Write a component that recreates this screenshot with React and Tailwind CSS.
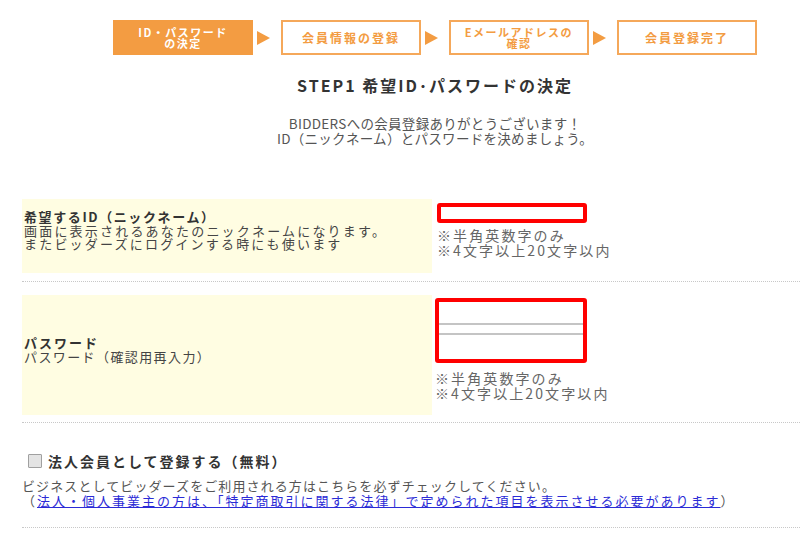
import React from 'react';

const StepBox = ({ active, lines, small }) => (
  <div
    className={
      'w-[140px] h-[35px] flex flex-col items-center justify-center font-bold text-center ' +
      (active
        ? 'bg-[#f39c42] text-white'
        : 'bg-white border-2 border-[#f5a85a] text-[#f39c42]')
    }
  >
    {lines.map((l, i) => (
      <span
        key={i}
        className={small ? 'text-[11px] leading-[11px] tracking-[1.5px]' : 'text-[12px] leading-[14px] tracking-[2px]'}
      >
        {l}
      </span>
    ))}
  </div>
);

const Arrow = () => (
  <div className="ml-[4px] mr-[11px] w-0 h-0 border-l-[13px] border-l-[#f39c42] border-y-[7px] border-y-transparent" />
);

const Notes = () => (
  <div className="text-[14px] leading-[15px] tracking-[2.1px] text-[#666]">
    <div>※半角英数字のみ</div>
    <div>※4文字以上20文字以内</div>
  </div>
);

const Divider = ({ className }) => (
  <div className={'border-t border-dotted border-[#c8c8c8] ' + className} />
);

export default function App() {
  return (
    <div className="w-[800px] h-[554px] bg-white overflow-hidden font-['Noto_Sans_CJK_JP',sans-serif]">
      <div className="ml-[22px] w-[826px]">
        {/* step bar */}
        <div className="pt-[20px] flex items-center justify-center">
          <StepBox active small lines={['ID・パスワード', 'の決定']} />
          <Arrow />
          <StepBox lines={['会員情報の登録']} />
          <Arrow />
          <StepBox small lines={['Eメールアドレスの', '確認']} />
          <Arrow />
          <StepBox lines={['会員登録完了']} />
        </div>

        <h1 className="mt-[20px] text-center text-[16px] leading-[20px] font-bold tracking-[2px] text-[#333]">
          STEP1 希望ID･パスワードの決定
        </h1>

        <div className="mt-[21px] text-center text-[13.5px] leading-[15px] tracking-[0.3px] text-[#555]">
          <div>BIDDERSへの会員登録ありがとうございます！</div>
          <div>ID（ニックネーム）とパスワードを決めましょう。</div>
        </div>

        {/* row 1 */}
        <div className="mt-[53px] flex h-[74px]">
          <div className="w-[410px] bg-[#fffde2] pt-[11px] pl-[2px] text-[13px] leading-[13.5px] tracking-[2.2px] text-[#444]">
            <div className="font-bold tracking-[1.6px] text-[#333]">希望するID（ニックネーム）</div>
            <div>画面に表示されるあなたのニックネームになります。</div>
            <div>またビッダーズにログインする時にも使います</div>
          </div>
          <div className="pl-[5px] pt-[4px]">
            <div className="w-[150px] h-[20px] border-[4px] border-[#ff0000] rounded-[3px] bg-white" />
            <div className="mt-[5px]">
              <Notes />
            </div>
          </div>
        </div>

        <Divider className="mt-[8px]" />

        {/* row 2 */}
        <div className="mt-[13px] flex h-[120px]">
          <div className="w-[410px] bg-[#fffde2] pt-[41px] pl-[2px] text-[13px] leading-[14px] tracking-[1.4px] text-[#444]">
            <div className="font-bold tracking-[2px] text-[#333]">パスワード</div>
            <div>パスワード（確認用再入力）</div>
          </div>
          <div className="pl-[3px] pt-[3px]">
            <div className="w-[152px] h-[65px] border-[4px] border-[#ff0000] rounded-[3px] bg-white flex flex-col">
              <div className="h-[23px] border-b-2 border-[#c4c4c4]" />
              <div className="h-[8px]" />
              <div className="border-t-2 border-[#c4c4c4]" />
            </div>
            <div className="mt-[8px]">
              <Notes />
            </div>
          </div>
        </div>

        <Divider className="mt-[7px]" />

        {/* corporate */}
        <div className="mt-[30px] flex items-center pl-[6px]">
          <div className="w-[14px] h-[14px] border border-[#a0a0a0] bg-[#e4e4e4] rounded-[1px]" />
          <span className="ml-[6px] text-[14px] leading-[16px] font-bold tracking-[2px] text-[#333]">
            法人会員として登録する（無料）
          </span>
        </div>
        <div className="mt-[9px] text-[13px] leading-[15px] text-[#555]">
          <div className="tracking-[1.1px]">ビジネスとしてビッダーズをご利用される方はこちらを必ずチェックしてください。</div>
          <div className="tracking-[2px]">
            （<a href="#" className="text-[#2b2bd6] underline">法人・個人事業主の方は、「特定商取引に関する法律」で定められた項目を表示させる必要があります</a>）
          </div>
        </div>

        <Divider className="mt-[19px]" />
      </div>
    </div>
  );
}
